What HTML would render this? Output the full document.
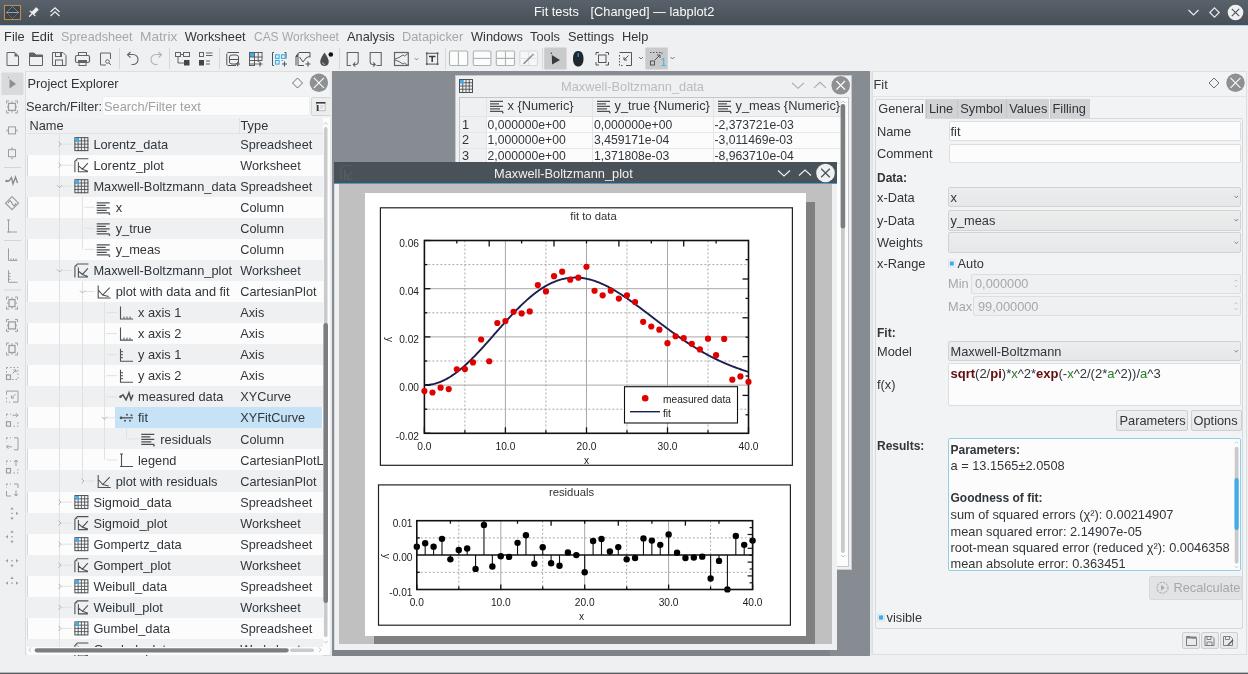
<!DOCTYPE html><html><head><meta charset="utf-8"><style>
*{margin:0;padding:0;box-sizing:border-box}
html,body{width:1248px;height:674px;overflow:hidden;-webkit-font-smoothing:antialiased;background:#eff0f1;font-family:"Liberation Sans", sans-serif;font-size:12.7px;color:#31363b}
.a{position:absolute}
.t{position:absolute;white-space:nowrap;line-height:1;margin-top:1.2px}
b{font-size:12px}
.dis{color:#a5a8ab}
svg{position:absolute;overflow:visible}
</style></head><body><div style="position:absolute;left:0;top:0;width:1248px;height:674px;will-change:transform">
<div class="a" style="left:0;top:0;width:1248px;height:25px;background:linear-gradient(#59626b,#474e56)"></div>
<div class="a" style="left:0;top:25px;width:1248px;height:1px;background:#a9d7f0"></div>
<svg style="left:0;top:0" width="70" height="25">
<rect x="4.5" y="5.5" width="16" height="14" fill="#3d434a" stroke="#b98d4e" stroke-width="1.1"/>
<path d="M6 12.5 H19" stroke="#c5cad0" stroke-width="0.7"/>
<path d="M7 12 L12.5 6.5 L18 12" stroke="#5f8fb5" stroke-width="0.9" fill="none"/>
<path d="M7 13 L12.5 18.5 L18 13" stroke="#6b737b" stroke-width="0.8" fill="none"/>
<path d="M29.5 16.3 L32 13.8" stroke="#f0f0f0" stroke-width="1.3" stroke-linecap="round"/><path d="M30.3 11.2 L35 15.6" stroke="#f0f0f0" stroke-width="1.3" stroke-linecap="round"/><path d="M31.8 12 L36.2 7.6 L38.4 9.8 L34 14.2 Z" fill="#f0f0f0" stroke="#f0f0f0" stroke-width="0.8" stroke-linejoin="round"/>
<path d="M50.5 12 L55 7.8 L59.5 12 M50.5 16 L55 11.8 L59.5 16" stroke="#f0f0f0" stroke-width="1.2" fill="none"/>
</svg>
<div class="t" style="left:534px;top:5px;font-size:12.8px;color:#fcfcfc">Fit tests</div><div class="t" style="left:590.5px;top:5px;font-size:12.8px;color:#fcfcfc">[Changed] — labplot2</div>
<svg style="left:1170px;top:0" width="78" height="25">
<path d="M1188.5 10 L1193.5 15 L1198.5 10" transform="translate(-1170,0)" stroke="#e8eaec" stroke-width="1.2" fill="none"/>
<path d="M1214.5 7.8 L1219.2 12.5 L1214.5 17.2 L1209.8 12.5 Z" transform="translate(-1170,0)" stroke="#e8eaec" stroke-width="1.2" fill="none"/>
<circle cx="65.5" cy="12.5" r="7.8" fill="#eff0f1"/>
<path d="M61.8 8.8 L69.2 16.2 M69.2 8.8 L61.8 16.2" stroke="#4a5158" stroke-width="1.1"/>
</svg>
<div class="t" style="left:4.1px;top:29.6px;font-size:12.8px">File</div>
<div class="t" style="left:31.3px;top:29.6px;font-size:12.8px">Edit</div>
<div class="t dis" style="left:61.3px;top:29.6px;font-size:12.8px;transform:scaleX(0.985);transform-origin:0 0">Spreadsheet</div>
<div class="t dis" style="left:140.3px;top:29.6px;font-size:12.8px;transform:scaleX(1.07);transform-origin:0 0">Matrix</div>
<div class="t" style="left:184.7px;top:29.6px;font-size:12.8px">Worksheet</div>
<div class="t dis" style="left:254px;top:29.6px;font-size:12.8px;transform:scaleX(0.935);transform-origin:0 0">CAS Worksheet</div>
<div class="t" style="left:347px;top:29.6px;font-size:12.8px">Analysis</div>
<div class="t dis" style="left:402px;top:29.6px;font-size:12.8px">Datapicker</div>
<div class="t" style="left:471px;top:29.6px;font-size:12.8px">Windows</div>
<div class="t" style="left:530px;top:29.6px;font-size:12.8px">Tools</div>
<div class="t" style="left:568px;top:29.6px;font-size:12.8px">Settings</div>
<div class="t" style="left:622px;top:29.6px;font-size:12.8px">Help</div>
<svg style="left:0;top:0" width="1248" height="72"><path d="M7 52.5 H15 L18.5 56 V65.5 H7 Z" fill="none" stroke="#606468" stroke-width="1"/><path d="M14.5 52.5 L18.5 56.5 H14.5 Z" fill="#606468"/><path d="M29.5 53 H34 L36 55 H42.5 V65.5 H29.5 Z" fill="none" stroke="#606468"/><path d="M29.5 53 H34 L36 55 H42.5 V57 H29.5 Z" fill="#606468"/><path d="M52.5 52.5 H63 L66 55.5 V65.5 H52.5 Z" fill="none" stroke="#606468"/><rect x="55.5" y="52.5" width="6" height="4" fill="none" stroke="#606468"/><rect x="60" y="53" width="1.5" height="3" fill="#606468"/><rect x="55.5" y="60" width="7" height="5.5" fill="none" stroke="#606468"/><rect x="78.5" y="52.5" width="8" height="3" fill="none" stroke="#606468"/><rect x="75.5" y="55.5" width="14" height="7" rx="1.5" fill="none" stroke="#606468" stroke-width="1.2"/><rect x="78" y="60" width="9" height="2.2" fill="#606468"/><rect x="79" y="62.5" width="7" height="3" fill="none" stroke="#606468"/><path d="M110.5 59 V53 H100.5 V65 H106" fill="none" stroke="#606468"/><circle cx="107.5" cy="61.5" r="1.8" fill="none" stroke="#606468"/><path d="M109 63 L111 65" stroke="#606468"/><rect x="119" y="48" width="1" height="21" fill="#d5d7d9"/><rect x="169" y="48" width="1" height="21" fill="#d5d7d9"/><rect x="219" y="48" width="1" height="21" fill="#d5d7d9"/><rect x="339" y="48" width="1" height="21" fill="#d5d7d9"/><rect x="445" y="48" width="1" height="21" fill="#d5d7d9"/><rect x="542" y="48" width="1" height="21" fill="#d5d7d9"/><path d="M128 54.5 H133 A5 5 0 0 1 133 64.5 H131.5" fill="none" stroke="#606468" stroke-width="1.1"/><path d="M130.5 52 L127.5 54.8 L130.5 57.5" fill="none" stroke="#606468" stroke-width="1.1"/><path d="M161 54.5 H156 A5 5 0 0 0 156 64.5 H157.5" fill="none" stroke="#b0b3b6" stroke-width="1.1"/><path d="M158.5 52 L161.5 54.8 L158.5 57.5" fill="none" stroke="#b0b3b6" stroke-width="1.1"/><rect x="175.5" y="52.5" width="5" height="4" fill="none" stroke="#606468"/><rect x="183.5" y="52.5" width="6" height="4" fill="none" stroke="#606468"/><path d="M180.5 54.5 H183.5 M178 56.5 V63 H184" fill="none" stroke="#606468"/><rect x="184" y="60" width="5.5" height="5.5" fill="#444"/><rect x="199.5" y="52.5" width="4" height="4" fill="none" stroke="#606468"/><path d="M206 53 H212.5 M206 55.5 H212.5 M206 61 H210 M206 64 H210" stroke="#606468"/><rect x="199" y="60" width="5" height="5.5" fill="#444"/><path d="M227.5 52.5 H239 M226.8 53.5 V65 M227.5 65.5 H236" stroke="#505356" fill="none" stroke-width="1"/><path d="M229.5 57 Q229.5 55 232 55 H236 Q238.5 55 238.5 57 V62 Q238.5 64 236 64 H232 Q229.5 64 229.5 62 Z" fill="none" stroke="#505356"/><path d="M229.5 59.5 H238.5" stroke="#505356"/><path d="M235.5 64 H240 M237.75 61.8 V66.2" stroke="#505356" stroke-width="1.1"/><rect x="249.5" y="52.5" width="5" height="4.5" fill="#3daee9"/><path d="M249.5 52 V66 M254.5 52 V66 M258.2 52 V62 M262 52 V60 M249 52.5 H262.5 M249 57 H262.5 M249 60.5 H262.5 M249 64 H257 M249 65.5 H255" stroke="#505356" fill="none" stroke-width="0.9"/><path d="M257.5 64 H262.5 M260 61.5 V66.5" stroke="#505356" stroke-width="1.1"/><path d="M274 52.5 H272.5 V65.5 H274 M284.5 52.5 H286 V58.5" stroke="#505356" fill="none"/><rect x="275.5" y="54.8" width="3.6" height="3.6" fill="none" stroke="#3daee9" stroke-width="1.1"/><rect x="281.5" y="54.8" width="3.6" height="3.6" fill="none" stroke="#3daee9" stroke-width="1.1"/><rect x="275.5" y="60.5" width="3.6" height="3.6" fill="none" stroke="#3daee9" stroke-width="1.1"/><path d="M281.5 60.5 H283" stroke="#3daee9" stroke-width="1.1"/><path d="M282 64 H287 M284.5 61.5 V66.5" stroke="#505356" stroke-width="1.1"/><path d="M296 65.5 V56 L299 52.5 H310 V57.5 M298 53.5 V65.5 H304" stroke="#505356" fill="none"/><path d="M296 56 H298" stroke="#505356" stroke-width="2"/><path d="M299.5 57 L303 62 L306 58 L310 56" stroke="#505356" fill="none"/><path d="M305.5 64 H310.5 M308 61.5 V66.5" stroke="#505356" stroke-width="1.1"/><path d="M324.5 52.5 Q320 59 320.2 62 Q320.7 66 324.5 66 Q328.3 66 328.8 62 Q329 59 324.5 52.5 Z" fill="#4a4d50"/><path d="M322.5 62.5 Q323 64.5 325 64.5" stroke="#d8d9da" stroke-width="0.8" fill="none"/><circle cx="330.8" cy="54.5" r="2.3" fill="#111"/><path d="M351 65.5 H347.2 V52.5 H358.2 V62 Q358.2 64.5 355.5 64.5 H353.5 M355.3 62.3 L353.2 64.5 L355.3 66.7" fill="none" stroke="#606468" stroke-width="1.1"/><path d="M376.5 65.5 H381.2 V52.5 H370.2 V62 Q370.2 64.5 373 64.5 H375 M373.2 62.3 L375.3 64.5 L373.2 66.7" fill="none" stroke="#606468" stroke-width="1.1"/><rect x="394.5" y="52.5" width="13.8" height="13" fill="none" stroke="#606468" stroke-width="1.2"/><path d="M395 59 L399 57.5 L403 55 L404.5 56 L408 53.5 M395 60 L399 61.5 L403 64 L404.5 63 L408 65.5" fill="none" stroke="#606468" stroke-width="1"/><path d="M414.8 58.2 L416.5 59.9 L418.2 58.2" stroke="#606468" fill="none" stroke-width="0.8"/><rect x="426.8" y="53.3" width="10.8" height="10.8" fill="none" stroke="#606468" stroke-width="1.1"/><path d="M429 56.5 H435.5 M432.2 56.5 V62" stroke="#3a3d40" stroke-width="1.6"/><circle cx="426.8" cy="53.3" r="1.1" fill="#606468"/><circle cx="437.6" cy="53.3" r="1.1" fill="#606468"/><circle cx="426.8" cy="64.1" r="1.1" fill="#606468"/><circle cx="437.6" cy="64.1" r="1.1" fill="#606468"/><rect x="449.5" y="51" width="18.2" height="14.5" rx="1.2" fill="#fcfcfc" stroke="#aeb1b4" stroke-width="1.1"/><rect x="473.3" y="51" width="17.6" height="14.5" rx="1.2" fill="#fcfcfc" stroke="#aeb1b4" stroke-width="1.1"/><rect x="496.3" y="51" width="18.2" height="14.5" rx="1.2" fill="#fcfcfc" stroke="#aeb1b4" stroke-width="1.1"/><path d="M458.4 51.5 V65" stroke="#aeb1b4" stroke-width="1.1"/><path d="M473.8 58.4 H490.4" stroke="#aeb1b4" stroke-width="1.1"/><path d="M496.8 58.4 H514 M505.5 51.5 V65" stroke="#aeb1b4" stroke-width="1.1"/><rect x="519.8" y="51" width="17.7" height="14.5" rx="1.2" fill="#f6f7f7" stroke="#d6d8da" stroke-width="1.1"/><path d="M520.3 58.4 H537 M528.6 51.5 V65" stroke="#dfe1e3" stroke-width="1"/><path d="M524 63.5 L532 55.5" stroke="#8a8d90" stroke-width="1.6" stroke-linecap="round"/><path d="M531.5 53.5 Q534.5 53 534.5 55.5 L532.5 56 Z" fill="#b5b8bb"/><rect x="544.2" y="47.6" width="22.4" height="22" rx="1" fill="#c9cacc"/><path d="M551.8 55 L560 60 L552.1 64.5 Z" fill="#3a3a3a"/><circle cx="551.3" cy="53.3" r="0.7" fill="#333"/><path d="M578.2 51 C583 51 583.5 56 583.5 59 C583.5 64 581 66.5 578.2 66.5 C575.4 66.5 573 64 573 59 C573 56 573.5 51 578.2 51 Z" fill="#1e2830"/><rect x="577.5" y="53" width="1.5" height="4" fill="#3a7fb0"/><path d="M596 52.5 H599 M605.5 52.5 H608.5 M596 52.5 V55 M608.5 52.5 V55 M596 62 V65 H599 M608.5 62 V65 H605.5" stroke="#555" fill="none"/><rect x="598.5" y="55" width="7.5" height="7.5" fill="none" stroke="#555" stroke-width="1"/><path d="M619.5 52.5 H631.5 V65.5 H626" stroke="#555" fill="none"/><path d="M619.5 55 V65.5 H623" stroke="#555" fill="none" stroke-dasharray="1.5 1.5"/><path d="M628.5 55.5 L624 60 M624 57 V60 H627" stroke="#555" fill="none"/><path d="M639 57 L641 59 L643 57" stroke="#555" fill="none" stroke-width="0.8"/><rect x="645.3" y="47.6" width="22.5" height="22" rx="1" fill="#c9cacc"/><path d="M650 52.5 H662 V55" stroke="#555" fill="none" stroke-dasharray="1.5 1.5"/><rect x="650.5" y="61" width="4" height="4" fill="none" stroke="#555"/><path d="M655 60 L660 55 M657 55 H660 V58" stroke="#555" fill="none"/><text x="660.5" y="66" font-size="11" fill="#3daee9" font-family="Liberation Sans">1</text><path d="M670.5 57 L672.5 59 L674.5 57" stroke="#555" fill="none" stroke-width="0.8"/></svg>
<svg style="left:0;top:0" width="26" height="660"><rect x="1.5" y="72.6" width="22" height="22.4" rx="1" fill="#d9dadc"/><path d="M9.5 79 L16 84 L9.5 88.5 Z" fill="#8d9093"/><circle cx="8.5" cy="77.5" r="0.6" fill="#8d9093"/><path d="M6.5 103.4 V100.9 H9 M15 100.9 H17.5 V103.4 M17.5 110.4 V112.9 H15 M9 112.9 H6.5 V110.4" fill="none" stroke="#9b9ea1"/><rect x="8.5" y="103.4" width="7" height="7" fill="none" stroke="#9b9ea1" stroke-width="1.3"/><path d="M12 100.9 L10.8 102.4 H13.2 Z M12 112.9 L10.8 111.4 H13.2 Z M6.8 106.9 L8.3 105.7 V108.10000000000001 Z M17.2 106.9 L15.7 105.7 V108.10000000000001 Z" fill="#9b9ea1"/><rect x="8.5" y="126.9" width="7" height="7" fill="none" stroke="#9b9ea1"/><path d="M6 130.4 L7.5 128.9 V131.9 Z M18 130.4 L16.5 128.9 V131.9 Z" fill="#9b9ea1"/><rect x="8.5" y="149.7" width="7" height="7" fill="none" stroke="#9b9ea1"/><path d="M12 147.2 L10.5 148.7 H13.5 Z M12 159.2 L10.5 157.7 H13.5 Z" fill="#9b9ea1"/><rect x="4" y="167" width="17" height="1" fill="#d3d5d7"/><path d="M6.5 181 H9 L11.5 177.5 L13 184 L15.5 177 L17.5 183" fill="none" stroke="#86898c" stroke-width="1.3"/><circle cx="6.5" cy="181" r="1.2" fill="#86898c"/><path d="M12 196.7 L18.5 203.2 L12 209.7 L5.5 203.2 Z" fill="none" stroke="#9b9ea1" stroke-width="1.2"/><path d="M8 203.2 Q10 198.2 12 203.2 T16 203.2" fill="none" stroke="#7c7f82"/><path d="M8.5 220 V232 H17 M7 220 H10 M7 232 H10" fill="none" stroke="#9b9ea1"/><rect x="4" y="240" width="17" height="1" fill="#d3d5d7"/><path d="M8.5 248.4 V260.4 H17.5" fill="none" stroke="#9b9ea1"/><path d="M11 258.4 V260.4 M13.5 258.4 V260.4 M16 258.4 V260.4" stroke="#9b9ea1"/><path d="M8.5 270.3 V282.3 H17.5" fill="none" stroke="#9b9ea1"/><path d="M8.5 273.3 H10.5 M8.5 276.3 H10.5 M8.5 279.3 H10.5" stroke="#9b9ea1"/><rect x="4" y="289.5" width="17" height="1" fill="#d3d5d7"/><path d="M6.5 299.6 V297.1 H9 M15 297.1 H17.5 V299.6 M17.5 306.6 V309.1 H15 M9 309.1 H6.5 V306.6" fill="none" stroke="#9b9ea1"/><rect x="9" y="299.6" width="6" height="7" fill="none" stroke="#9b9ea1" stroke-width="1.3"/><path d="M12 297.1 L10.8 298.6 H13.2 Z M12 309.1 L10.8 307.6 H13.2 Z M6.8 303.1 L8.3 301.90000000000003 V304.3 Z M17.2 303.1 L15.7 301.90000000000003 V304.3 Z" fill="#9b9ea1"/><path d="M6.5 321.9 V319.4 H9 M15 319.4 H17.5 V321.9 M17.5 328.9 V331.4 H15 M9 331.4 H6.5 V328.9" fill="none" stroke="#9b9ea1"/><rect x="8.5" y="321.9" width="7" height="7" fill="none" stroke="#9b9ea1" stroke-width="1.3"/><path d="M6.8 325.4 L8.3 324.2 V326.59999999999997 Z M17.2 325.4 L15.7 324.2 V326.59999999999997 Z" fill="#9b9ea1"/><path d="M6.5 345.5 V343 H9 M15 343 H17.5 V345.5 M17.5 352.5 V355 H15 M9 355 H6.5 V352.5" fill="none" stroke="#9b9ea1"/><rect x="9" y="345.5" width="6" height="7" fill="none" stroke="#9b9ea1" stroke-width="1.3"/><path d="M12 343 L10.8 344.5 H13.2 Z M12 355 L10.8 353.5 H13.2 Z" fill="#9b9ea1"/><rect x="6.5" y="367.5" width="11.5" height="12" fill="none" stroke="#9b9ea1" stroke-dasharray="1.5 2"/><rect x="6.5" y="375.0" width="4" height="4.5" fill="none" stroke="#9b9ea1" stroke-width="1.2"/><path d="M12.5 373.5 L16 370.0 M13.5 370.0 H16 V372.5" fill="none" stroke="#9b9ea1"/><path d="M6.5 394.6 V391.1 H18 V402.1 H13" fill="none" stroke="#9b9ea1"/><path d="M6.5 397.6 V402.1 H10" fill="none" stroke="#9b9ea1" stroke-dasharray="1.5 2"/><path d="M15.5 394.1 L11.5 398.1 M11.5 395.6 V398.1 H14" fill="none" stroke="#9b9ea1"/><path d="M6.5 414.2 H11 M6.5 414.2 V418.2 M18 422.2 V426.2 H13" fill="none" stroke="#9b9ea1" stroke-dasharray="1.5 2"/><rect x="6.5" y="421.7" width="4" height="4.5" fill="none" stroke="#9b9ea1" stroke-width="1.2"/><path d="M12.5 415.2 H18 M16 413.2 L18 415.2 L16 417.2" fill="none" stroke="#9b9ea1"/><path d="M6.5 437.8 H11 M6.5 437.8 V441.8" fill="none" stroke="#9b9ea1" stroke-dasharray="1.5 2"/><path d="M14 437.8 H18 V449.8 H14" fill="none" stroke="#9b9ea1"/><path d="M6.5 446.8 H12 M8.5 444.8 L6.5 446.8 L8.5 448.8" fill="none" stroke="#9b9ea1"/><path d="M6.5 461 H11 M6.5 461 V465 M18 469 V473 H13" fill="none" stroke="#9b9ea1" stroke-dasharray="1.5 2"/><rect x="6.5" y="468.5" width="4" height="4.5" fill="none" stroke="#9b9ea1" stroke-width="1.2"/><path d="M16 460 V466 M14 462 L16 460 L18 462" fill="none" stroke="#9b9ea1"/><path d="M6.5 484 H11 M6.5 484 V488" fill="none" stroke="#9b9ea1" stroke-dasharray="1.5 2"/><path d="M14 484 H18 V488 M6.5 491 V496 H11" fill="none" stroke="#9b9ea1"/><path d="M16 490.5 V496 M14 494 L16 496 L18 494" fill="none" stroke="#9b9ea1"/><path d="M12 506.9 L10.3 509.4 H13.7 Z M12 519.9 L10.3 517.4 H13.7 Z M18.5 513.4 L16 511.7 V515.1 Z" fill="#9b9ea1"/><rect x="11.3" y="512.6999999999999" width="1.4" height="1.4" fill="#9b9ea1"/><path d="M12 530.2 L10.3 532.7 H13.7 Z M12 543.2 L10.3 540.7 H13.7 Z M5.5 536.7 L8 535.0 V538.4000000000001 Z" fill="#9b9ea1"/><rect x="11.3" y="536.0" width="1.4" height="1.4" fill="#9b9ea1"/><path d="M12 567.2 L10.3 564.7 H13.7 Z M5.5 560.7 L8 559.0 V562.4000000000001 Z M18.5 560.7 L16 559.0 V562.4000000000001 Z" fill="#9b9ea1"/><rect x="11.3" y="560.0" width="1.4" height="1.4" fill="#9b9ea1"/><path d="M12 576.6 L10.3 579.1 H13.7 Z M5.5 583.1 L8 581.4 V584.8000000000001 Z M18.5 583.1 L16 581.4 V584.8000000000001 Z" fill="#9b9ea1"/><rect x="11.3" y="582.4" width="1.4" height="1.4" fill="#9b9ea1"/></svg>
<div class="a" style="left:25px;top:71px;width:306px;height:584px;background:#f2f3f5;border:1px solid #dcdee0;border-right:none"></div>
<div class="t" style="left:27.5px;top:77px;font-size:12.8px">Project Explorer</div>
<svg style="left:0;top:0" width="1" height="1"><path d="M297.5 78 L302.5 83 L297.5 88 L292.5 83 Z" fill="none" stroke="#6d7073" stroke-width="1"/><circle cx="318.9" cy="82.8" r="9.25" fill="#8e9194"/><path d="M313.9 77.8 L323.9 87.8 M323.9 77.8 L313.9 87.8" stroke="#fcfcfc" stroke-width="1.1"/></svg>
<div class="t" style="left:26px;top:99.8px;font-size:12.8px">Search/Filter:</div>
<div class="a" style="left:101.5px;top:96px;width:208px;height:20px;background:#fcfcfc;border:1px solid #eceeef;border-radius:2px"></div>
<div class="t" style="left:104px;top:99.8px;color:#9fa2a5;font-size:12.8px">Search/Filter text</div>
<div class="a" style="left:311.3px;top:96.5px;width:19.3px;height:19px;background:#eceded;border:1px solid #d3d5d7;border-radius:2px"></div>
<svg style="left:0;top:0" width="1" height="1"><rect x="316.3" y="102.3" width="8.8" height="8.5" fill="#f4f5f6" stroke="#9a9da0" stroke-width="0.6"/><rect x="316" y="102" width="9.4" height="1.6" fill="#3a3d40"/><rect x="317" y="105" width="1.6" height="6" fill="#3a3d40"/><path d="M320 106 H324 M320 108 H323" stroke="#b8babc" stroke-width="0.7"/></svg>
<div class="a" style="left:26.5px;top:117.5px;width:304px;height:538px;background:#fcfcfc;border:1px solid #d6d8da"></div>
<div class="a" style="left:27px;top:118px;width:296px;height:15.5px;background:#eff0f1;border-bottom:1px solid #e1e3e5"></div>
<div class="a" style="left:238.5px;top:118px;width:1px;height:15.5px;background:#dfe1e3"></div>
<div class="t" style="left:29.5px;top:119.2px;font-size:12.8px">Name</div>
<div class="t" style="left:240.5px;top:119.2px;font-size:12.8px">Type</div>
<div class="a" style="left:27px;top:133.60px;width:296px;height:21.05px;background:#eff0f1"></div>
<div class="a" style="left:27px;top:175.71px;width:296px;height:21.05px;background:#eff0f1"></div>
<div class="a" style="left:27px;top:217.82px;width:296px;height:21.05px;background:#eff0f1"></div>
<div class="a" style="left:27px;top:259.93px;width:296px;height:21.05px;background:#eff0f1"></div>
<div class="a" style="left:27px;top:302.04px;width:296px;height:21.05px;background:#eff0f1"></div>
<div class="a" style="left:27px;top:344.15px;width:296px;height:21.05px;background:#eff0f1"></div>
<div class="a" style="left:27px;top:386.26px;width:296px;height:21.05px;background:#eff0f1"></div>
<div class="a" style="left:27px;top:428.37px;width:296px;height:21.05px;background:#eff0f1"></div>
<div class="a" style="left:27px;top:470.48px;width:296px;height:21.05px;background:#eff0f1"></div>
<div class="a" style="left:27px;top:512.59px;width:296px;height:21.05px;background:#eff0f1"></div>
<div class="a" style="left:27px;top:554.70px;width:296px;height:21.05px;background:#eff0f1"></div>
<div class="a" style="left:27px;top:596.81px;width:296px;height:21.05px;background:#eff0f1"></div>
<div class="a" style="left:27px;top:638.92px;width:296px;height:21.05px;background:#eff0f1"></div>
<div class="a" style="left:115.2px;top:407.31px;width:207.3px;height:21.05px;background:#c5e2f6"></div>
<div class="t" style="left:93.4px;top:137.6px;font-size:12.8px">Lorentz_data</div>
<div class="t" style="left:240.3px;top:137.6px;font-size:12.7px">Spreadsheet</div>
<div class="t" style="left:93.4px;top:158.7px;font-size:12.8px">Lorentz_plot</div>
<div class="t" style="left:240.3px;top:158.7px;font-size:12.7px">Worksheet</div>
<div class="t" style="left:93.4px;top:179.7px;font-size:12.8px">Maxwell-Boltzmann_data</div>
<div class="t" style="left:240.3px;top:179.7px;font-size:12.7px">Spreadsheet</div>
<div class="t" style="left:115.7px;top:200.8px;font-size:12.8px">x</div>
<div class="t" style="left:240.3px;top:200.8px;font-size:12.7px">Column</div>
<div class="t" style="left:115.7px;top:221.8px;font-size:12.8px">y_true</div>
<div class="t" style="left:240.3px;top:221.8px;font-size:12.7px">Column</div>
<div class="t" style="left:115.7px;top:242.9px;font-size:12.8px">y_meas</div>
<div class="t" style="left:240.3px;top:242.9px;font-size:12.7px">Column</div>
<div class="t" style="left:93.4px;top:264.0px;font-size:12.8px">Maxwell-Boltzmann_plot</div>
<div class="t" style="left:240.3px;top:264.0px;font-size:12.7px">Worksheet</div>
<div class="t" style="left:115.7px;top:285.0px;font-size:12.8px">plot with data and fit</div>
<div class="t" style="left:240.3px;top:285.0px;font-size:12.7px">CartesianPlot</div>
<div class="t" style="left:138.0px;top:306.1px;font-size:12.8px">x axis 1</div>
<div class="t" style="left:240.3px;top:306.1px;font-size:12.7px">Axis</div>
<div class="t" style="left:138.0px;top:327.1px;font-size:12.8px">x axis 2</div>
<div class="t" style="left:240.3px;top:327.1px;font-size:12.7px">Axis</div>
<div class="t" style="left:138.0px;top:348.2px;font-size:12.8px">y axis 1</div>
<div class="t" style="left:240.3px;top:348.2px;font-size:12.7px">Axis</div>
<div class="t" style="left:138.0px;top:369.2px;font-size:12.8px">y axis 2</div>
<div class="t" style="left:240.3px;top:369.2px;font-size:12.7px">Axis</div>
<div class="t" style="left:138.0px;top:390.3px;font-size:12.8px">measured data</div>
<div class="t" style="left:240.3px;top:390.3px;font-size:12.7px">XYCurve</div>
<div class="t" style="left:138.0px;top:411.3px;font-size:12.8px">fit</div>
<div class="t" style="left:240.3px;top:411.3px;font-size:12.7px">XYFitCurve</div>
<div class="t" style="left:160.3px;top:432.4px;font-size:12.8px">residuals</div>
<div class="t" style="left:240.3px;top:432.4px;font-size:12.7px">Column</div>
<div class="t" style="left:138.0px;top:453.5px;font-size:12.8px">legend</div>
<div class="t" style="left:240.3px;top:453.5px;font-size:12.7px">CartesianPlotL</div>
<div class="t" style="left:115.7px;top:474.5px;font-size:12.8px">plot with residuals</div>
<div class="t" style="left:240.3px;top:474.5px;font-size:12.7px">CartesianPlot</div>
<div class="t" style="left:93.4px;top:495.6px;font-size:12.8px">Sigmoid_data</div>
<div class="t" style="left:240.3px;top:495.6px;font-size:12.7px">Spreadsheet</div>
<div class="t" style="left:93.4px;top:516.6px;font-size:12.8px">Sigmoid_plot</div>
<div class="t" style="left:240.3px;top:516.6px;font-size:12.7px">Worksheet</div>
<div class="t" style="left:93.4px;top:537.7px;font-size:12.8px">Gompertz_data</div>
<div class="t" style="left:240.3px;top:537.7px;font-size:12.7px">Spreadsheet</div>
<div class="t" style="left:93.4px;top:558.7px;font-size:12.8px">Gompert_plot</div>
<div class="t" style="left:240.3px;top:558.7px;font-size:12.7px">Worksheet</div>
<div class="t" style="left:93.4px;top:579.8px;font-size:12.8px">Weibull_data</div>
<div class="t" style="left:240.3px;top:579.8px;font-size:12.7px">Spreadsheet</div>
<div class="t" style="left:93.4px;top:600.8px;font-size:12.8px">Weibull_plot</div>
<div class="t" style="left:240.3px;top:600.8px;font-size:12.7px">Worksheet</div>
<div class="t" style="left:93.4px;top:621.9px;font-size:12.8px">Gumbel_data</div>
<div class="t" style="left:240.3px;top:621.9px;font-size:12.7px">Spreadsheet</div>
<div class="t" style="left:93.4px;top:642.9px;font-size:12.8px">Gumbel_plot</div>
<div class="t" style="left:240.3px;top:642.9px;font-size:12.7px">Worksheet</div>
<svg style="left:0;top:0" width="1" height="1"><path d="M59.5 133.6 V650.0" stroke="#e0e1e3"/><path d="M82.5 196.8 V249.4" stroke="#e0e1e3"/><path d="M82.5 281.0 V481.0" stroke="#e0e1e3"/><path d="M104.5 302.0 V460.0" stroke="#e0e1e3"/><path d="M126.5 428.4 V438.9" stroke="#e0e1e3"/><path d="M61.5 144.1 H72.4" stroke="#e0e1e3"/><path d="M58.5 141.6 L61.0 144.1 L58.5 146.6" fill="none" stroke="#a7aaad" stroke-width="0.9"/><rect x="74.9" y="137.6275" width="13" height="13" fill="none" stroke="#4d5154"/><path d="M78.15 137.1275 V151.1275 M74.4 140.88 H88.4" stroke="#4d5154" stroke-width="0.9"/><path d="M81.40 137.1275 V151.1275 M74.4 144.13 H88.4" stroke="#4d5154" stroke-width="0.9"/><path d="M84.65 137.1275 V151.1275 M74.4 147.38 H88.4" stroke="#4d5154" stroke-width="0.9"/><rect x="75.4" y="138.1275" width="3.5" height="3.5" fill="#3daee9"/><path d="M61.5 165.2 H72.4" stroke="#e0e1e3"/><path d="M58.5 162.7 L61.0 165.2 L58.5 167.7" fill="none" stroke="#a7aaad" stroke-width="0.9"/><path d="M74.9 172.1825 V161.1825 L77.4 158.6825 H88.4" fill="none" stroke="#4d5154" stroke-width="1.1"/><path d="M76.4 159.6825 L76.4 161.1825 H77.9 Z" fill="#4d5154"/><path d="M78.4 162.1825 V171.6825 H87.9 M78.9 166.1825 L82.4 169.1825 L87.9 163.1825 M82.4 169.1825 L87.9 171.1825" fill="none" stroke="#4d5154" stroke-width="1.1"/><path d="M61.5 186.2 H72.4" stroke="#e0e1e3"/><path d="M57.0 185.2 L59.5 187.7 L62.0 185.2" fill="none" stroke="#a7aaad" stroke-width="0.9"/><rect x="74.9" y="179.73749999999998" width="13" height="13" fill="none" stroke="#4d5154"/><path d="M78.15 179.23749999999998 V193.23749999999998 M74.4 182.99 H88.4" stroke="#4d5154" stroke-width="0.9"/><path d="M81.40 179.23749999999998 V193.23749999999998 M74.4 186.24 H88.4" stroke="#4d5154" stroke-width="0.9"/><path d="M84.65 179.23749999999998 V193.23749999999998 M74.4 189.49 H88.4" stroke="#4d5154" stroke-width="0.9"/><rect x="75.4" y="180.23749999999998" width="3.5" height="3.5" fill="#3daee9"/><path d="M84.5 207.3 H94.7" stroke="#e0e1e3"/><path d="M96.7 202.7925 H109.7 M96.7 205.2925 H105.7 M96.7 207.7925 H109.7 M96.7 210.2925 H106.7 M96.7 212.7925 H109.7" stroke="#4d5154" stroke-width="1.2"/><rect x="108.7" y="213.2925" width="1.5" height="1.5" fill="#4d5154"/><path d="M84.5 228.3 H94.7" stroke="#e0e1e3"/><path d="M96.7 223.8475 H109.7 M96.7 226.3475 H105.7 M96.7 228.8475 H109.7 M96.7 231.3475 H106.7 M96.7 233.8475 H109.7" stroke="#4d5154" stroke-width="1.2"/><rect x="108.7" y="234.3475" width="1.5" height="1.5" fill="#4d5154"/><path d="M84.5 249.4 H94.7" stroke="#e0e1e3"/><path d="M96.7 244.9025 H109.7 M96.7 247.4025 H105.7 M96.7 249.9025 H109.7 M96.7 252.4025 H106.7 M96.7 254.9025 H109.7" stroke="#4d5154" stroke-width="1.2"/><rect x="108.7" y="255.4025" width="1.5" height="1.5" fill="#4d5154"/><path d="M61.5 270.5 H72.4" stroke="#e0e1e3"/><path d="M57.0 269.5 L59.5 272.0 L62.0 269.5" fill="none" stroke="#a7aaad" stroke-width="0.9"/><path d="M74.9 277.4575 V266.4575 L77.4 263.9575 H88.4" fill="none" stroke="#4d5154" stroke-width="1.1"/><path d="M76.4 264.9575 L76.4 266.4575 H77.9 Z" fill="#4d5154"/><path d="M78.4 267.4575 V276.9575 H87.9 M78.9 271.4575 L82.4 274.4575 L87.9 268.4575 M82.4 274.4575 L87.9 276.4575" fill="none" stroke="#4d5154" stroke-width="1.1"/><path d="M84.5 291.5 H94.7" stroke="#e0e1e3"/><path d="M80.0 290.5 L82.5 293.0 L85.0 290.5" fill="none" stroke="#a7aaad" stroke-width="0.9"/><path d="M98.2 285.5125 V298.0125 H110.7 M98.7 290.5125 L102.7 295.0125 L109.7 287.5125 M102.7 295.0125 L108.7 296.5125" fill="none" stroke="#4d5154" stroke-width="1.1"/><path d="M106.5 312.6 H117.0" stroke="#e0e1e3"/><path d="M120.5 306.56749999999994 V319.06749999999994 H133.0" fill="none" stroke="#4d5154" stroke-width="1.1"/><path d="M124.0 316.56749999999994 V318.56749999999994 M127.0 316.56749999999994 V318.56749999999994 M130.0 316.56749999999994 V318.56749999999994" stroke="#4d5154"/><path d="M106.5 333.6 H117.0" stroke="#e0e1e3"/><path d="M120.5 327.6225 V340.1225 H133.0" fill="none" stroke="#4d5154" stroke-width="1.1"/><path d="M124.0 337.6225 V339.6225 M127.0 337.6225 V339.6225 M130.0 337.6225 V339.6225" stroke="#4d5154"/><path d="M106.5 354.7 H117.0" stroke="#e0e1e3"/><path d="M120.5 348.67749999999995 V361.17749999999995 H133.0" fill="none" stroke="#4d5154" stroke-width="1.1"/><path d="M120.5 351.67749999999995 H123.0 M120.5 354.67749999999995 H123.0 M120.5 357.67749999999995 H123.0" stroke="#4d5154"/><path d="M106.5 375.7 H117.0" stroke="#e0e1e3"/><path d="M120.5 369.73249999999996 V382.23249999999996 H133.0" fill="none" stroke="#4d5154" stroke-width="1.1"/><path d="M120.5 372.73249999999996 H123.0 M120.5 375.73249999999996 H123.0 M120.5 378.73249999999996 H123.0" stroke="#4d5154"/><path d="M106.5 396.8 H117.0" stroke="#e0e1e3"/><path d="M120.0 396.78749999999997 L123.0 394.78749999999997 L126.0 399.78749999999997 L129.0 392.78749999999997 L131.0 399.78749999999997 L133.0 394.78749999999997" fill="none" stroke="#4d5154" stroke-width="1.5"/><circle cx="120.5" cy="396.78749999999997" r="1.3" fill="#4d5154"/><path d="M106.5 417.8 H117.0" stroke="#e0e1e3"/><path d="M102.0 416.8 L104.5 419.3 L107.0 416.8" fill="none" stroke="#a7aaad" stroke-width="0.9"/><path d="M120.0 417.8424999999999 H133.0" stroke="#4d5154" stroke-width="1.3"/><circle cx="121.0" cy="417.8424999999999" r="1.3" fill="#4d5154"/><circle cx="127.0" cy="414.8424999999999" r="1" fill="#4d5154"/><circle cx="130.0" cy="420.8424999999999" r="1" fill="#4d5154"/><circle cx="131.5" cy="415.3424999999999" r="1" fill="#4d5154"/><circle cx="125.0" cy="420.8424999999999" r="1" fill="#4d5154"/><path d="M128.5 438.9 H139.3" stroke="#e0e1e3"/><path d="M141.3 434.3975 H154.3 M141.3 436.8975 H150.3 M141.3 439.3975 H154.3 M141.3 441.8975 H151.3 M141.3 444.3975 H154.3" stroke="#4d5154" stroke-width="1.2"/><rect x="153.3" y="444.8975" width="1.5" height="1.5" fill="#4d5154"/><path d="M106.5 460.0 H117.0" stroke="#e0e1e3"/><path d="M121.5 453.95249999999993 V466.45249999999993 H133.0 M120.0 453.95249999999993 H123.0 M120.0 466.45249999999993 H123.0" fill="none" stroke="#4d5154" stroke-width="1.1"/><path d="M84.5 481.0 H94.7" stroke="#e0e1e3"/><path d="M81.5 478.5 L84.0 481.0 L81.5 483.5" fill="none" stroke="#a7aaad" stroke-width="0.9"/><path d="M98.2 475.0075 V487.5075 H110.7 M98.7 480.0075 L102.7 484.5075 L109.7 477.0075 M102.7 484.5075 L108.7 486.0075" fill="none" stroke="#4d5154" stroke-width="1.1"/><path d="M61.5 502.1 H72.4" stroke="#e0e1e3"/><path d="M58.5 499.6 L61.0 502.1 L58.5 504.6" fill="none" stroke="#a7aaad" stroke-width="0.9"/><rect x="74.9" y="495.56249999999994" width="13" height="13" fill="none" stroke="#4d5154"/><path d="M78.15 495.06249999999994 V509.06249999999994 M74.4 498.81 H88.4" stroke="#4d5154" stroke-width="0.9"/><path d="M81.40 495.06249999999994 V509.06249999999994 M74.4 502.06 H88.4" stroke="#4d5154" stroke-width="0.9"/><path d="M84.65 495.06249999999994 V509.06249999999994 M74.4 505.31 H88.4" stroke="#4d5154" stroke-width="0.9"/><rect x="75.4" y="496.06249999999994" width="3.5" height="3.5" fill="#3daee9"/><path d="M61.5 523.1 H72.4" stroke="#e0e1e3"/><path d="M58.5 520.6 L61.0 523.1 L58.5 525.6" fill="none" stroke="#a7aaad" stroke-width="0.9"/><path d="M74.9 530.1175000000001 V519.1175000000001 L77.4 516.6175000000001 H88.4" fill="none" stroke="#4d5154" stroke-width="1.1"/><path d="M76.4 517.6175000000001 L76.4 519.1175000000001 H77.9 Z" fill="#4d5154"/><path d="M78.4 520.1175000000001 V529.6175000000001 H87.9 M78.9 524.1175000000001 L82.4 527.1175000000001 L87.9 521.1175000000001 M82.4 527.1175000000001 L87.9 529.1175000000001" fill="none" stroke="#4d5154" stroke-width="1.1"/><path d="M61.5 544.2 H72.4" stroke="#e0e1e3"/><path d="M58.5 541.7 L61.0 544.2 L58.5 546.7" fill="none" stroke="#a7aaad" stroke-width="0.9"/><rect x="74.9" y="537.6725" width="13" height="13" fill="none" stroke="#4d5154"/><path d="M78.15 537.1725 V551.1725 M74.4 540.92 H88.4" stroke="#4d5154" stroke-width="0.9"/><path d="M81.40 537.1725 V551.1725 M74.4 544.17 H88.4" stroke="#4d5154" stroke-width="0.9"/><path d="M84.65 537.1725 V551.1725 M74.4 547.42 H88.4" stroke="#4d5154" stroke-width="0.9"/><rect x="75.4" y="538.1725" width="3.5" height="3.5" fill="#3daee9"/><path d="M61.5 565.2 H72.4" stroke="#e0e1e3"/><path d="M58.5 562.7 L61.0 565.2 L58.5 567.7" fill="none" stroke="#a7aaad" stroke-width="0.9"/><path d="M74.9 572.2275000000001 V561.2275000000001 L77.4 558.7275000000001 H88.4" fill="none" stroke="#4d5154" stroke-width="1.1"/><path d="M76.4 559.7275000000001 L76.4 561.2275000000001 H77.9 Z" fill="#4d5154"/><path d="M78.4 562.2275000000001 V571.7275000000001 H87.9 M78.9 566.2275000000001 L82.4 569.2275000000001 L87.9 563.2275000000001 M82.4 569.2275000000001 L87.9 571.2275000000001" fill="none" stroke="#4d5154" stroke-width="1.1"/><path d="M61.5 586.3 H72.4" stroke="#e0e1e3"/><path d="M58.5 583.8 L61.0 586.3 L58.5 588.8" fill="none" stroke="#a7aaad" stroke-width="0.9"/><rect x="74.9" y="579.7825" width="13" height="13" fill="none" stroke="#4d5154"/><path d="M78.15 579.2825 V593.2825 M74.4 583.03 H88.4" stroke="#4d5154" stroke-width="0.9"/><path d="M81.40 579.2825 V593.2825 M74.4 586.28 H88.4" stroke="#4d5154" stroke-width="0.9"/><path d="M84.65 579.2825 V593.2825 M74.4 589.53 H88.4" stroke="#4d5154" stroke-width="0.9"/><rect x="75.4" y="580.2825" width="3.5" height="3.5" fill="#3daee9"/><path d="M61.5 607.3 H72.4" stroke="#e0e1e3"/><path d="M58.5 604.8 L61.0 607.3 L58.5 609.8" fill="none" stroke="#a7aaad" stroke-width="0.9"/><path d="M74.9 614.3375 V603.3375 L77.4 600.8375 H88.4" fill="none" stroke="#4d5154" stroke-width="1.1"/><path d="M76.4 601.8375 L76.4 603.3375 H77.9 Z" fill="#4d5154"/><path d="M78.4 604.3375 V613.8375 H87.9 M78.9 608.3375 L82.4 611.3375 L87.9 605.3375 M82.4 611.3375 L87.9 613.3375" fill="none" stroke="#4d5154" stroke-width="1.1"/><path d="M61.5 628.4 H72.4" stroke="#e0e1e3"/><path d="M58.5 625.9 L61.0 628.4 L58.5 630.9" fill="none" stroke="#a7aaad" stroke-width="0.9"/><rect x="74.9" y="621.8925" width="13" height="13" fill="none" stroke="#4d5154"/><path d="M78.15 621.3925 V635.3925 M74.4 625.14 H88.4" stroke="#4d5154" stroke-width="0.9"/><path d="M81.40 621.3925 V635.3925 M74.4 628.39 H88.4" stroke="#4d5154" stroke-width="0.9"/><path d="M84.65 621.3925 V635.3925 M74.4 631.64 H88.4" stroke="#4d5154" stroke-width="0.9"/><rect x="75.4" y="622.3925" width="3.5" height="3.5" fill="#3daee9"/><path d="M61.5 649.4 H72.4" stroke="#e0e1e3"/><path d="M58.5 646.9 L61.0 649.4 L58.5 651.9" fill="none" stroke="#a7aaad" stroke-width="0.9"/><path d="M74.9 656.4475 V645.4475 L77.4 642.9475 H88.4" fill="none" stroke="#4d5154" stroke-width="1.1"/><path d="M76.4 643.9475 L76.4 645.4475 H77.9 Z" fill="#4d5154"/><path d="M78.4 646.4475 V655.9475 H87.9 M78.9 650.4475 L82.4 653.4475 L87.9 647.4475 M82.4 653.4475 L87.9 655.4475" fill="none" stroke="#4d5154" stroke-width="1.1"/></svg>
<div class="a" style="left:27px;top:647px;width:296px;height:7.5px;background:#fcfcfc"></div>
<svg style="left:0;top:0" width="1" height="1"><rect x="290" y="648.5" width="24" height="3.5" rx="1.7" fill="#c8cacc"/><rect x="34.7" y="648.2" width="254" height="4.2" rx="2.1" fill="#7b7e81"/><path d="M31 647.5 L29 649.8 L31 652" fill="none" stroke="#b4b6b8" stroke-width="0.8"/><path d="M319 647.5 L321 649.8 L319 652" fill="none" stroke="#b4b6b8" stroke-width="0.8"/></svg>
<div class="a" style="left:323px;top:118px;width:7px;height:525px;background:#fcfcfc"></div>
<svg style="left:0;top:0" width="1" height="1"><path d="M323.7 124.5 L325.7 122.5 L327.7 124.5" fill="none" stroke="#b4b6b8" stroke-width="0.8"/><rect x="323.9" y="127" width="3.6" height="510" rx="1.8" fill="#c8cacc"/><rect x="323.4" y="323" width="4.6" height="280" rx="2.3" fill="#7b7e81"/><path d="M323.7 641 L325.7 643 L327.7 641" fill="none" stroke="#b4b6b8" stroke-width="0.8"/></svg>
<div class="a" style="left:330px;top:71px;width:2px;height:584px;background:#e9eaec"></div>
<div class="a" style="left:332px;top:71px;width:538px;height:585px;background:#878b92"></div>
<div class="a" style="left:455px;top:75px;width:397px;height:495px;background:#eff0f1;border:1px solid #c7c9cc"></div>
<svg style="left:0;top:0" width="1" height="1"><rect x="459.5" y="79.5" width="13" height="13" fill="none" stroke="#4d5154"/><path d="M462.75 79 V93 M459 82.75 H473" stroke="#4d5154" stroke-width="0.9"/><path d="M466.00 79 V93 M459 86.00 H473" stroke="#4d5154" stroke-width="0.9"/><path d="M469.25 79 V93 M459 89.25 H473" stroke="#4d5154" stroke-width="0.9"/><rect x="460" y="80" width="3.5" height="3.5" fill="#3daee9"/></svg>
<div class="t" style="left:561px;top:79.5px;font-size:12.8px;color:#b9bcbf">Maxwell-Boltzmann_data</div>
<svg style="left:0;top:0" width="1" height="1"><path d="M792 82.8 L798 88.3 L804 82.8" fill="none" stroke="#a7aaad" stroke-width="1.1"/><path d="M814 87.8 L820 82.3 L826 87.8" fill="none" stroke="#a7aaad" stroke-width="1.1"/><circle cx="840.7" cy="85.3" r="9.3" fill="#8e9194"/><path d="M836.4000000000001 81.0 L845.0 89.6 M845.0 81.0 L836.4000000000001 89.6" stroke="#fcfcfc" stroke-width="1.3"/></svg>
<div class="a" style="left:459px;top:97px;width:389.5px;height:469.5px;background:#fcfcfc;border:1px solid #c4c6c9"></div>
<div class="a" style="left:460px;top:98px;width:381px;height:18.5px;background:#eff0f1;border-bottom:1px solid #e1e3e5"></div>
<div class="a" style="left:460px;top:116.5px;width:25.5px;height:449px;background:#eff0f1"></div>
<div class="a" style="left:485.5px;top:98px;width:1px;height:64px;background:#e1e3e5"></div>
<div class="a" style="left:592px;top:98px;width:1px;height:64px;background:#e1e3e5"></div>
<div class="a" style="left:712.5px;top:98px;width:1px;height:64px;background:#e1e3e5"></div>
<div class="a" style="left:460px;top:132.0px;width:381px;height:1px;background:#e4e6e8"></div>
<div class="a" style="left:460px;top:147.5px;width:381px;height:1px;background:#e4e6e8"></div>
<div class="a" style="left:460px;top:163.0px;width:381px;height:1px;background:#e4e6e8"></div>
<div class="t" style="left:507.5px;top:99px;font-size:12.8px">x {Numeric}</div>
<div class="t" style="left:614.5px;top:99px;font-size:12.8px">y_true {Numeric}</div>
<div class="t" style="left:735.5px;top:99px;font-size:12.8px">y_meas {Numeric}</div>
<svg style="left:0;top:0" width="1" height="1"><path d="M490 101.3 H503 M490 103.8 H499 M490 106.3 H503 M490 108.8 H500 M490 111.3 H503" stroke="#4d5154" stroke-width="1.2"/><rect x="502" y="111.8" width="1.5" height="1.5" fill="#4d5154"/><path d="M597 101.3 H610 M597 103.8 H606 M597 106.3 H610 M597 108.8 H607 M597 111.3 H610" stroke="#4d5154" stroke-width="1.2"/><rect x="609" y="111.8" width="1.5" height="1.5" fill="#4d5154"/><path d="M718 101.3 H731 M718 103.8 H727 M718 106.3 H731 M718 108.8 H728 M718 111.3 H731" stroke="#4d5154" stroke-width="1.2"/><rect x="730" y="111.8" width="1.5" height="1.5" fill="#4d5154"/></svg>
<div class="t" style="left:462px;top:117.5px;font-size:12.8px">1</div>
<div class="t" style="left:487.5px;top:117.5px;font-size:12.2px">0,000000e+00</div>
<div class="t" style="left:594px;top:117.5px;font-size:12.2px">0,000000e+00</div>
<div class="t" style="left:714.5px;top:117.5px;font-size:12.2px">-2,373721e-03</div>
<div class="t" style="left:462px;top:133.0px;font-size:12.8px">2</div>
<div class="t" style="left:487.5px;top:133.0px;font-size:12.2px">1,000000e+00</div>
<div class="t" style="left:594px;top:133.0px;font-size:12.2px">3,459171e-04</div>
<div class="t" style="left:714.5px;top:133.0px;font-size:12.2px">-3,011469e-03</div>
<div class="t" style="left:462px;top:148.5px;font-size:12.8px">3</div>
<div class="t" style="left:487.5px;top:148.5px;font-size:12.2px">2,000000e+00</div>
<div class="t" style="left:594px;top:148.5px;font-size:12.2px">1,371808e-03</div>
<div class="t" style="left:714.5px;top:148.5px;font-size:12.2px">-8,963710e-04</div>
<div class="t" style="left:462px;top:164.0px;font-size:12.8px">4</div>
<div class="t" style="left:487.5px;top:164.0px;font-size:12.2px">3,000000e+00</div>
<div class="t" style="left:594px;top:164.0px;font-size:12.2px">3,051917e-03</div>
<div class="t" style="left:714.5px;top:164.0px;font-size:12.2px">-2,000000e-03</div>
<svg style="left:0;top:0" width="1" height="1"><path d="M841 103 L843 101 L845 103" fill="none" stroke="#b4b6b8" stroke-width="0.8"/><rect x="841" y="105" width="3.8" height="448" rx="1.9" fill="#c8cacc"/><rect x="840.6" y="104" width="4.6" height="124.5" rx="2.3" fill="#7b7e81"/><path d="M841 555 L843 557 L845 555" fill="none" stroke="#b4b6b8" stroke-width="0.8"/></svg>
<div class="a" style="left:332px;top:650px;width:498px;height:6px;background:#7f848a"></div>
<div class="a" style="left:333.7px;top:162.2px;width:503.3px;height:487.8px;background:#eff0f1;border-left:1px solid #d9dbdd"></div>
<div class="a" style="left:333.7px;top:162px;width:503.3px;height:21px;background:#4a5259"></div>
<div class="a" style="left:333.7px;top:183px;width:503.3px;height:1px;background:#4f9bc8"></div>
<svg style="left:0;top:0" width="1" height="1"><path d="M341 180 V168 L343.5 165.5 H352 M344.5 170 V179 H353 M345 174 L348 177 L352.5 171" fill="none" stroke="#565e66" stroke-width="1.1"/></svg>
<div class="t" style="left:494px;top:167px;font-size:12.8px;color:#eff0f1">Maxwell-Boltzmann_plot</div>
<svg style="left:0;top:0" width="1" height="1"><path d="M778 170.5 L784 176 L790 170.5" fill="none" stroke="#eff0f1" stroke-width="1.1"/><path d="M799 175.5 L805 170 L811 175.5" fill="none" stroke="#eff0f1" stroke-width="1.1"/><circle cx="825.5" cy="173" r="9.3" fill="#eff0f1"/><path d="M821.2 168.7 L829.8 177.3 M829.8 168.7 L821.2 177.3" stroke="#4a5259" stroke-width="1.3"/></svg>
<div class="a" style="left:339px;top:184px;width:493px;height:460px;background:#c0c0c0"></div>
<div class="a" style="left:806.3px;top:202px;width:8.7px;height:442px;background:#808080"></div>
<div class="a" style="left:374px;top:635.6px;width:441px;height:8.4px;background:#808080"></div>
<div class="a" style="left:364.6px;top:193.2px;width:441.7px;height:442.4px;background:#ffffff"></div>
<svg style="left:0;top:0" width="1" height="1"><rect x="380.4" y="207.8" width="412" height="257.5" fill="none" stroke="#222" stroke-width="1.2"/><text x="593.5" y="219.5" font-size="11.3" text-anchor="middle" fill="#333" font-family="Liberation Sans" >fit to data</text><path d="M464.9 240.5 V433.3" stroke="#a8a8a8" stroke-width="1" stroke-dasharray="2 2"/><path d="M505.4 240.5 V433.3" stroke="#a8a8a8" stroke-width="1"/><path d="M545.9 240.5 V433.3" stroke="#a8a8a8" stroke-width="1" stroke-dasharray="2 2"/><path d="M586.5 240.5 V433.3" stroke="#a8a8a8" stroke-width="1"/><path d="M627.0 240.5 V433.3" stroke="#a8a8a8" stroke-width="1" stroke-dasharray="2 2"/><path d="M667.5 240.5 V433.3" stroke="#a8a8a8" stroke-width="1"/><path d="M708.0 240.5 V433.3" stroke="#a8a8a8" stroke-width="1" stroke-dasharray="2 2"/><path d="M424.4 409.2 H748.5" stroke="#a8a8a8" stroke-width="1" stroke-dasharray="2 2"/><path d="M424.4 385.1 H748.5" stroke="#a8a8a8" stroke-width="1"/><path d="M424.4 361.0 H748.5" stroke="#a8a8a8" stroke-width="1" stroke-dasharray="2 2"/><path d="M424.4 336.9 H748.5" stroke="#a8a8a8" stroke-width="1"/><path d="M424.4 312.8 H748.5" stroke="#a8a8a8" stroke-width="1" stroke-dasharray="2 2"/><path d="M424.4 288.7 H748.5" stroke="#a8a8a8" stroke-width="1"/><path d="M424.4 264.6 H748.5" stroke="#a8a8a8" stroke-width="1" stroke-dasharray="2 2"/><polyline points="424.40,385.10 425.21,385.09 426.02,385.07 426.83,385.02 427.64,384.96 428.45,384.89 429.26,384.80 430.07,384.69 430.88,384.56 431.69,384.42 432.50,384.26 433.31,384.08 434.12,383.89 434.93,383.68 435.74,383.45 436.55,383.21 437.36,382.95 438.17,382.68 438.98,382.39 439.79,382.08 440.60,381.76 441.42,381.42 442.23,381.07 443.04,380.70 443.85,380.32 444.66,379.92 445.47,379.50 446.28,379.07 447.09,378.63 447.90,378.17 448.71,377.70 449.52,377.21 450.33,376.71 451.14,376.19 451.95,375.66 452.76,375.12 453.57,374.56 454.38,373.99 455.19,373.41 456.00,372.81 456.81,372.20 457.62,371.58 458.43,370.95 459.24,370.30 460.05,369.64 460.86,368.97 461.67,368.29 462.48,367.60 463.29,366.90 464.10,366.18 464.91,365.46 465.72,364.73 466.53,363.98 467.34,363.23 468.15,362.47 468.96,361.69 469.77,360.91 470.58,360.12 471.39,359.33 472.20,358.52 473.01,357.70 473.83,356.88 474.64,356.05 475.45,355.22 476.26,354.37 477.07,353.52 477.88,352.67 478.69,351.81 479.50,350.94 480.31,350.06 481.12,349.19 481.93,348.30 482.74,347.42 483.55,346.52 484.36,345.63 485.17,344.73 485.98,343.82 486.79,342.92 487.60,342.01 488.41,341.10 489.22,340.18 490.03,339.26 490.84,338.35 491.65,337.43 492.46,336.51 493.27,335.59 494.08,334.66 494.89,333.74 495.70,332.82 496.51,331.90 497.32,330.97 498.13,330.05 498.94,329.13 499.75,328.21 500.56,327.30 501.37,326.38 502.18,325.47 502.99,324.56 503.80,323.65 504.61,322.75 505.42,321.85 506.24,320.95 507.05,320.05 507.86,319.16 508.67,318.28 509.48,317.40 510.29,316.52 511.10,315.65 511.91,314.78 512.72,313.92 513.53,313.07 514.34,312.22 515.15,311.38 515.96,310.54 516.77,309.71 517.58,308.89 518.39,308.07 519.20,307.26 520.01,306.46 520.82,305.67 521.63,304.89 522.44,304.11 523.25,303.34 524.06,302.58 524.87,301.83 525.68,301.09 526.49,300.36 527.30,299.63 528.11,298.92 528.92,298.21 529.73,297.52 530.54,296.83 531.35,296.16 532.16,295.50 532.97,294.84 533.78,294.20 534.59,293.57 535.40,292.95 536.21,292.33 537.02,291.74 537.84,291.15 538.65,290.57 539.46,290.01 540.27,289.45 541.08,288.91 541.89,288.38 542.70,287.86 543.51,287.36 544.32,286.86 545.13,286.38 545.94,285.91 546.75,285.46 547.56,285.01 548.37,284.58 549.18,284.16 549.99,283.75 550.80,283.36 551.61,282.98 552.42,282.61 553.23,282.26 554.04,281.91 554.85,281.58 555.66,281.27 556.47,280.96 557.28,280.67 558.09,280.40 558.90,280.13 559.71,279.88 560.52,279.64 561.33,279.42 562.14,279.20 562.95,279.00 563.76,278.82 564.57,278.64 565.38,278.48 566.19,278.34 567.00,278.20 567.81,278.08 568.62,277.97 569.43,277.88 570.25,277.79 571.06,277.72 571.87,277.67 572.68,277.62 573.49,277.59 574.30,277.57 575.11,277.56 575.92,277.57 576.73,277.59 577.54,277.62 578.35,277.66 579.16,277.71 579.97,277.78 580.78,277.86 581.59,277.95 582.40,278.05 583.21,278.17 584.02,278.29 584.83,278.43 585.64,278.58 586.45,278.74 587.26,278.91 588.07,279.09 588.88,279.28 589.69,279.49 590.50,279.70 591.31,279.93 592.12,280.16 592.93,280.41 593.74,280.66 594.55,280.93 595.36,281.21 596.17,281.49 596.98,281.79 597.79,282.10 598.60,282.41 599.41,282.74 600.22,283.07 601.03,283.42 601.84,283.77 602.65,284.13 603.47,284.50 604.28,284.88 605.09,285.26 605.90,285.66 606.71,286.06 607.52,286.47 608.33,286.89 609.14,287.32 609.95,287.75 610.76,288.19 611.57,288.64 612.38,289.10 613.19,289.56 614.00,290.03 614.81,290.50 615.62,290.99 616.43,291.48 617.24,291.97 618.05,292.47 618.86,292.98 619.67,293.49 620.48,294.01 621.29,294.53 622.10,295.06 622.91,295.59 623.72,296.13 624.53,296.68 625.34,297.22 626.15,297.78 626.96,298.33 627.77,298.90 628.58,299.46 629.39,300.03 630.20,300.60 631.01,301.18 631.82,301.76 632.63,302.34 633.44,302.93 634.25,303.52 635.07,304.11 635.88,304.70 636.69,305.30 637.50,305.90 638.31,306.50 639.12,307.11 639.93,307.71 640.74,308.32 641.55,308.93 642.36,309.54 643.17,310.16 643.98,310.77 644.79,311.39 645.60,312.00 646.41,312.62 647.22,313.24 648.03,313.86 648.84,314.48 649.65,315.10 650.46,315.72 651.27,316.34 652.08,316.96 652.89,317.59 653.70,318.21 654.51,318.83 655.32,319.45 656.13,320.07 656.94,320.69 657.75,321.31 658.56,321.92 659.37,322.54 660.18,323.16 660.99,323.77 661.80,324.39 662.61,325.00 663.42,325.61 664.23,326.22 665.04,326.83 665.85,327.43 666.66,328.04 667.47,328.64 668.29,329.24 669.10,329.84 669.91,330.44 670.72,331.03 671.53,331.63 672.34,332.22 673.15,332.81 673.96,333.39 674.77,333.97 675.58,334.56 676.39,335.13 677.20,335.71 678.01,336.28 678.82,336.85 679.63,337.42 680.44,337.98 681.25,338.54 682.06,339.10 682.87,339.65 683.68,340.20 684.49,340.75 685.30,341.30 686.11,341.84 686.92,342.37 687.73,342.91 688.54,343.44 689.35,343.97 690.16,344.49 690.97,345.01 691.78,345.53 692.59,346.04 693.40,346.55 694.21,347.05 695.02,347.56 695.83,348.05 696.64,348.55 697.45,349.04 698.26,349.52 699.07,350.01 699.88,350.48 700.70,350.96 701.51,351.43 702.32,351.89 703.13,352.36 703.94,352.82 704.75,353.27 705.56,353.72 706.37,354.17 707.18,354.61 707.99,355.05 708.80,355.48 709.61,355.91 710.42,356.34 711.23,356.76 712.04,357.17 712.85,357.59 713.66,358.00 714.47,358.40 715.28,358.80 716.09,359.20 716.90,359.59 717.71,359.98 718.52,360.37 719.33,360.75 720.14,361.12 720.95,361.49 721.76,361.86 722.57,362.23 723.38,362.59 724.19,362.94 725.00,363.29 725.81,363.64 726.62,363.99 727.43,364.33 728.24,364.66 729.05,364.99 729.86,365.32 730.67,365.65 731.48,365.97 732.30,366.28 733.11,366.59 733.92,366.90 734.73,367.21 735.54,367.51 736.35,367.80 737.16,368.10 737.97,368.39 738.78,368.67 739.59,368.95 740.40,369.23 741.21,369.51 742.02,369.78 742.83,370.04 743.64,370.31 744.45,370.57 745.26,370.82 746.07,371.08 746.88,371.32 747.69,371.57 748.50,371.81" fill="none" stroke="#1d1d4f" stroke-width="1.9"/><rect x="424.4" y="240.5" width="324.1" height="192.8" fill="none" stroke="#111" stroke-width="1.6"/><path d="M424.4 433.3 V427.3" stroke="#111" stroke-width="1.3"/><path d="M424.4 433.3 H430.4" stroke="#111" stroke-width="1.3"/><path d="M464.9 433.3 V430.3" stroke="#111" stroke-width="1.3"/><path d="M424.4 409.2 H427.4" stroke="#111" stroke-width="1.3"/><path d="M505.4 433.3 V427.3" stroke="#111" stroke-width="1.3"/><path d="M424.4 385.1 H430.4" stroke="#111" stroke-width="1.3"/><path d="M545.9 433.3 V430.3" stroke="#111" stroke-width="1.3"/><path d="M424.4 361.0 H427.4" stroke="#111" stroke-width="1.3"/><path d="M586.5 433.3 V427.3" stroke="#111" stroke-width="1.3"/><path d="M424.4 336.9 H430.4" stroke="#111" stroke-width="1.3"/><path d="M627.0 433.3 V430.3" stroke="#111" stroke-width="1.3"/><path d="M424.4 312.8 H427.4" stroke="#111" stroke-width="1.3"/><path d="M667.5 433.3 V427.3" stroke="#111" stroke-width="1.3"/><path d="M424.4 288.7 H430.4" stroke="#111" stroke-width="1.3"/><path d="M708.0 433.3 V430.3" stroke="#111" stroke-width="1.3"/><path d="M424.4 264.6 H427.4" stroke="#111" stroke-width="1.3"/><path d="M748.5 433.3 V427.3" stroke="#111" stroke-width="1.3"/><path d="M424.4 240.5 H430.4" stroke="#111" stroke-width="1.3"/><path d="M456.8 240.5 V243.5" stroke="#111" stroke-width="1.3"/><path d="M489.2 240.5 V246.5" stroke="#111" stroke-width="1.3"/><path d="M521.6 240.5 V243.5" stroke="#111" stroke-width="1.3"/><path d="M554.0 240.5 V246.5" stroke="#111" stroke-width="1.3"/><path d="M586.5 240.5 V243.5" stroke="#111" stroke-width="1.3"/><path d="M618.9 240.5 V246.5" stroke="#111" stroke-width="1.3"/><path d="M651.3 240.5 V243.5" stroke="#111" stroke-width="1.3"/><path d="M683.7 240.5 V246.5" stroke="#111" stroke-width="1.3"/><path d="M716.1 240.5 V243.5" stroke="#111" stroke-width="1.3"/><path d="M748.5 259.6 H745.5" stroke="#111" stroke-width="1.3"/><path d="M748.5 279.0 H742.5" stroke="#111" stroke-width="1.3"/><path d="M748.5 298.4 H745.5" stroke="#111" stroke-width="1.3"/><path d="M748.5 317.8 H742.5" stroke="#111" stroke-width="1.3"/><path d="M748.5 337.2 H745.5" stroke="#111" stroke-width="1.3"/><path d="M748.5 356.6 H742.5" stroke="#111" stroke-width="1.3"/><path d="M748.5 376.0 H745.5" stroke="#111" stroke-width="1.3"/><path d="M748.5 395.4 H742.5" stroke="#111" stroke-width="1.3"/><path d="M748.5 414.8 H745.5" stroke="#111" stroke-width="1.3"/><text x="419.0" y="439.5" font-size="10.2" text-anchor="end" fill="#222" font-family="Liberation Sans" >-0.02</text><text x="419.0" y="391.3" font-size="10.2" text-anchor="end" fill="#222" font-family="Liberation Sans" >0.00</text><text x="419.0" y="343.1" font-size="10.2" text-anchor="end" fill="#222" font-family="Liberation Sans" >0.02</text><text x="419.0" y="294.9" font-size="10.2" text-anchor="end" fill="#222" font-family="Liberation Sans" >0.04</text><text x="419.0" y="246.7" font-size="10.2" text-anchor="end" fill="#222" font-family="Liberation Sans" >0.06</text><text x="424.4" y="449.8" font-size="10.2" text-anchor="middle" fill="#222" font-family="Liberation Sans" >0.0</text><text x="505.4" y="449.8" font-size="10.2" text-anchor="middle" fill="#222" font-family="Liberation Sans" >10.0</text><text x="586.5" y="449.8" font-size="10.2" text-anchor="middle" fill="#222" font-family="Liberation Sans" >20.0</text><text x="667.5" y="449.8" font-size="10.2" text-anchor="middle" fill="#222" font-family="Liberation Sans" >30.0</text><text x="748.5" y="449.8" font-size="10.2" text-anchor="middle" fill="#222" font-family="Liberation Sans" >40.0</text><text x="586.5" y="463.5" font-size="10.2" text-anchor="middle" fill="#222" font-family="Liberation Sans" >x</text><text x="0.0" y="0.0" font-size="10.2" text-anchor="middle" fill="#222" font-family="Liberation Sans" transform="translate(386.4,339.5) rotate(90)">y</text><circle cx="424.40" cy="391.03" r="3.1" fill="#e00000"/><circle cx="432.50" cy="392.52" r="3.1" fill="#e00000"/><circle cx="440.60" cy="387.69" r="3.1" fill="#e00000"/><circle cx="448.71" cy="389.07" r="3.1" fill="#e00000"/><circle cx="456.81" cy="369.24" r="3.1" fill="#e00000"/><circle cx="464.91" cy="369.05" r="3.1" fill="#e00000"/><circle cx="473.01" cy="362.38" r="3.1" fill="#e00000"/><circle cx="481.12" cy="339.52" r="3.1" fill="#e00000"/><circle cx="489.22" cy="361.24" r="3.1" fill="#e00000"/><circle cx="497.32" cy="323.02" r="3.1" fill="#e00000"/><circle cx="505.42" cy="321.08" r="3.1" fill="#e00000"/><circle cx="513.53" cy="311.81" r="3.1" fill="#e00000"/><circle cx="521.63" cy="313.47" r="3.1" fill="#e00000"/><circle cx="529.73" cy="311.40" r="3.1" fill="#e00000"/><circle cx="537.84" cy="285.07" r="3.1" fill="#e00000"/><circle cx="545.94" cy="291.38" r="3.1" fill="#e00000"/><circle cx="554.04" cy="276.15" r="3.1" fill="#e00000"/><circle cx="562.14" cy="271.71" r="3.1" fill="#e00000"/><circle cx="570.25" cy="279.67" r="3.1" fill="#e00000"/><circle cx="578.35" cy="277.66" r="3.1" fill="#e00000"/><circle cx="586.45" cy="266.73" r="3.1" fill="#e00000"/><circle cx="594.55" cy="290.76" r="3.1" fill="#e00000"/><circle cx="602.65" cy="295.36" r="3.1" fill="#e00000"/><circle cx="610.76" cy="290.70" r="3.1" fill="#e00000"/><circle cx="618.86" cy="298.59" r="3.1" fill="#e00000"/><circle cx="626.96" cy="295.37" r="3.1" fill="#e00000"/><circle cx="635.07" cy="302.08" r="3.1" fill="#e00000"/><circle cx="643.17" cy="321.85" r="3.1" fill="#e00000"/><circle cx="651.27" cy="326.49" r="3.1" fill="#e00000"/><circle cx="659.37" cy="329.72" r="3.1" fill="#e00000"/><circle cx="667.47" cy="343.15" r="3.1" fill="#e00000"/><circle cx="675.58" cy="336.27" r="3.1" fill="#e00000"/><circle cx="683.68" cy="338.18" r="3.1" fill="#e00000"/><circle cx="691.78" cy="343.82" r="3.1" fill="#e00000"/><circle cx="699.88" cy="349.40" r="3.1" fill="#e00000"/><circle cx="707.99" cy="338.66" r="3.1" fill="#e00000"/><circle cx="716.09" cy="355.15" r="3.1" fill="#e00000"/><circle cx="724.19" cy="338.91" r="3.1" fill="#e00000"/><circle cx="732.30" cy="379.70" r="3.1" fill="#e00000"/><circle cx="740.40" cy="376.41" r="3.1" fill="#e00000"/><circle cx="748.50" cy="381.96" r="3.1" fill="#e00000"/><rect x="624.5" y="386.7" width="113" height="36.3" fill="#fff" stroke="#111" stroke-width="1.1"/><circle cx="645.2" cy="398.2" r="3.3" fill="#e00000"/><text x="663.0" y="402.5" font-size="10.2" text-anchor="start" fill="#222" font-family="Liberation Sans" >measured data</text><path d="M630 411.7 H660" stroke="#1d1d4f" stroke-width="1.4"/><text x="663.0" y="416.5" font-size="10.2" text-anchor="start" fill="#222" font-family="Liberation Sans" >fit</text><rect x="378.5" y="484.9" width="411.9" height="140.3" fill="none" stroke="#222" stroke-width="1.2"/><text x="571.5" y="495.5" font-size="11.3" text-anchor="middle" fill="#333" font-family="Liberation Sans" >residuals</text><path d="M458.8 520.7 V589.5" stroke="#a8a8a8" stroke-width="1" stroke-dasharray="2 2"/><path d="M500.8 520.7 V589.5" stroke="#a8a8a8" stroke-width="1"/><path d="M542.7 520.7 V589.5" stroke="#a8a8a8" stroke-width="1" stroke-dasharray="2 2"/><path d="M584.7 520.7 V589.5" stroke="#a8a8a8" stroke-width="1"/><path d="M626.7 520.7 V589.5" stroke="#a8a8a8" stroke-width="1" stroke-dasharray="2 2"/><path d="M668.6 520.7 V589.5" stroke="#a8a8a8" stroke-width="1"/><path d="M710.6 520.7 V589.5" stroke="#a8a8a8" stroke-width="1" stroke-dasharray="2 2"/><path d="M416.8 537.9 H752.6" stroke="#a8a8a8" stroke-width="1" stroke-dasharray="2 2"/><path d="M416.8 572.3 H752.6" stroke="#a8a8a8" stroke-width="1" stroke-dasharray="2 2"/><path d="M416.8 555.1 H752.6" stroke="#111" stroke-width="1.5"/><path d="M416.80 555.1 V546.64" stroke="#111" stroke-width="1.1"/><circle cx="416.80" cy="546.64" r="3.2" fill="#000"/><path d="M425.19 555.1 V543.30" stroke="#111" stroke-width="1.1"/><circle cx="425.19" cy="543.30" r="3.2" fill="#000"/><path d="M433.59 555.1 V546.64" stroke="#111" stroke-width="1.1"/><circle cx="433.59" cy="546.64" r="3.2" fill="#000"/><path d="M441.99 555.1 V538.86" stroke="#111" stroke-width="1.1"/><circle cx="441.99" cy="538.86" r="3.2" fill="#000"/><path d="M450.38 555.1 V559.33" stroke="#111" stroke-width="1.1"/><circle cx="450.38" cy="559.33" r="3.2" fill="#000"/><path d="M458.78 555.1 V549.97" stroke="#111" stroke-width="1.1"/><circle cx="458.78" cy="549.97" r="3.2" fill="#000"/><path d="M467.17 555.1 V548.43" stroke="#111" stroke-width="1.1"/><circle cx="467.17" cy="548.43" r="3.2" fill="#000"/><path d="M475.56 555.1 V568.89" stroke="#111" stroke-width="1.1"/><circle cx="475.56" cy="568.89" r="3.2" fill="#000"/><path d="M483.96 555.1 V525.03" stroke="#111" stroke-width="1.1"/><circle cx="483.96" cy="525.03" r="3.2" fill="#000"/><path d="M492.36 555.1 V566.45" stroke="#111" stroke-width="1.1"/><circle cx="492.36" cy="566.45" r="3.2" fill="#000"/><path d="M500.75 555.1 V556.20" stroke="#111" stroke-width="1.1"/><circle cx="500.75" cy="556.20" r="3.2" fill="#000"/><path d="M509.14 555.1 V556.89" stroke="#111" stroke-width="1.1"/><circle cx="509.14" cy="556.89" r="3.2" fill="#000"/><path d="M517.54 555.1 V542.85" stroke="#111" stroke-width="1.1"/><circle cx="517.54" cy="542.85" r="3.2" fill="#000"/><path d="M525.94 555.1 V535.29" stroke="#111" stroke-width="1.1"/><circle cx="525.94" cy="535.29" r="3.2" fill="#000"/><path d="M534.33 555.1 V563.77" stroke="#111" stroke-width="1.1"/><circle cx="534.33" cy="563.77" r="3.2" fill="#000"/><path d="M542.73 555.1 V547.29" stroke="#111" stroke-width="1.1"/><circle cx="542.73" cy="547.29" r="3.2" fill="#000"/><path d="M551.12 555.1 V563.32" stroke="#111" stroke-width="1.1"/><circle cx="551.12" cy="563.32" r="3.2" fill="#000"/><path d="M559.51 555.1 V565.80" stroke="#111" stroke-width="1.1"/><circle cx="559.51" cy="565.80" r="3.2" fill="#000"/><path d="M567.91 555.1 V552.42" stroke="#111" stroke-width="1.1"/><circle cx="567.91" cy="552.42" r="3.2" fill="#000"/><path d="M576.31 555.1 V555.10" stroke="#111" stroke-width="1.1"/><circle cx="576.31" cy="555.10" r="3.2" fill="#000"/><path d="M584.70 555.1 V572.23" stroke="#111" stroke-width="1.1"/><circle cx="584.70" cy="572.23" r="3.2" fill="#000"/><path d="M593.10 555.1 V541.06" stroke="#111" stroke-width="1.1"/><circle cx="593.10" cy="541.06" r="3.2" fill="#000"/><path d="M601.49 555.1 V539.07" stroke="#111" stroke-width="1.1"/><circle cx="601.49" cy="539.07" r="3.2" fill="#000"/><path d="M609.88 555.1 V551.52" stroke="#111" stroke-width="1.1"/><circle cx="609.88" cy="551.52" r="3.2" fill="#000"/><path d="M618.28 555.1 V547.08" stroke="#111" stroke-width="1.1"/><circle cx="618.28" cy="547.08" r="3.2" fill="#000"/><path d="M626.67 555.1 V559.33" stroke="#111" stroke-width="1.1"/><circle cx="626.67" cy="559.33" r="3.2" fill="#000"/><path d="M635.07 555.1 V557.99" stroke="#111" stroke-width="1.1"/><circle cx="635.07" cy="557.99" r="3.2" fill="#000"/><path d="M643.47 555.1 V538.42" stroke="#111" stroke-width="1.1"/><circle cx="643.47" cy="538.42" r="3.2" fill="#000"/><path d="M651.86 555.1 V540.62" stroke="#111" stroke-width="1.1"/><circle cx="651.86" cy="540.62" r="3.2" fill="#000"/><path d="M660.25 555.1 V544.85" stroke="#111" stroke-width="1.1"/><circle cx="660.25" cy="544.85" r="3.2" fill="#000"/><path d="M668.65 555.1 V534.39" stroke="#111" stroke-width="1.1"/><circle cx="668.65" cy="534.39" r="3.2" fill="#000"/><path d="M677.05 555.1 V552.66" stroke="#111" stroke-width="1.1"/><circle cx="677.05" cy="552.66" r="3.2" fill="#000"/><path d="M685.44 555.1 V557.99" stroke="#111" stroke-width="1.1"/><circle cx="685.44" cy="557.99" r="3.2" fill="#000"/><path d="M693.84 555.1 V557.54" stroke="#111" stroke-width="1.1"/><circle cx="693.84" cy="557.54" r="3.2" fill="#000"/><path d="M702.23 555.1 V556.65" stroke="#111" stroke-width="1.1"/><circle cx="702.23" cy="556.65" r="3.2" fill="#000"/><path d="M710.62 555.1 V578.49" stroke="#111" stroke-width="1.1"/><circle cx="710.62" cy="578.49" r="3.2" fill="#000"/><path d="M719.02 555.1 V560.88" stroke="#111" stroke-width="1.1"/><circle cx="719.02" cy="560.88" r="3.2" fill="#000"/><path d="M727.41 555.1 V589.40" stroke="#111" stroke-width="1.1"/><circle cx="727.41" cy="589.40" r="3.2" fill="#000"/><path d="M735.81 555.1 V535.94" stroke="#111" stroke-width="1.1"/><circle cx="735.81" cy="535.94" r="3.2" fill="#000"/><path d="M744.21 555.1 V544.85" stroke="#111" stroke-width="1.1"/><circle cx="744.21" cy="544.85" r="3.2" fill="#000"/><path d="M752.60 555.1 V540.62" stroke="#111" stroke-width="1.1"/><circle cx="752.60" cy="540.62" r="3.2" fill="#000"/><rect x="416.8" y="520.7" width="335.8" height="68.8" fill="none" stroke="#111" stroke-width="1.6"/><path d="M416.8 589.5 V584.5" stroke="#111" stroke-width="1.3"/><path d="M458.8 589.5 V586.5" stroke="#111" stroke-width="1.3"/><path d="M500.8 589.5 V584.5" stroke="#111" stroke-width="1.3"/><path d="M542.7 589.5 V586.5" stroke="#111" stroke-width="1.3"/><path d="M584.7 589.5 V584.5" stroke="#111" stroke-width="1.3"/><path d="M626.7 589.5 V586.5" stroke="#111" stroke-width="1.3"/><path d="M668.6 589.5 V584.5" stroke="#111" stroke-width="1.3"/><path d="M710.6 589.5 V586.5" stroke="#111" stroke-width="1.3"/><path d="M752.6 589.5 V584.5" stroke="#111" stroke-width="1.3"/><path d="M450.4 520.7 V523.7" stroke="#111" stroke-width="1.3"/><path d="M484.0 520.7 V525.7" stroke="#111" stroke-width="1.3"/><path d="M517.5 520.7 V523.7" stroke="#111" stroke-width="1.3"/><path d="M551.1 520.7 V525.7" stroke="#111" stroke-width="1.3"/><path d="M584.7 520.7 V523.7" stroke="#111" stroke-width="1.3"/><path d="M618.3 520.7 V525.7" stroke="#111" stroke-width="1.3"/><path d="M651.9 520.7 V523.7" stroke="#111" stroke-width="1.3"/><path d="M685.4 520.7 V525.7" stroke="#111" stroke-width="1.3"/><path d="M719.0 520.7 V523.7" stroke="#111" stroke-width="1.3"/><path d="M752.6 527.6 H749.6" stroke="#111" stroke-width="1.2"/><path d="M752.6 534.5 H747.6" stroke="#111" stroke-width="1.2"/><path d="M752.6 541.4 H749.6" stroke="#111" stroke-width="1.2"/><path d="M752.6 548.3 H747.6" stroke="#111" stroke-width="1.2"/><path d="M752.6 555.2 H749.6" stroke="#111" stroke-width="1.2"/><path d="M752.6 562.1 H747.6" stroke="#111" stroke-width="1.2"/><path d="M752.6 569.0 H749.6" stroke="#111" stroke-width="1.2"/><path d="M752.6 575.9 H747.6" stroke="#111" stroke-width="1.2"/><path d="M752.6 582.8 H749.6" stroke="#111" stroke-width="1.2"/><path d="M416.8 537.9 H419.8" stroke="#111" stroke-width="1.3"/><path d="M416.8 572.3 H419.8" stroke="#111" stroke-width="1.3"/><text x="412.5" y="595.5" font-size="10.2" text-anchor="end" fill="#222" font-family="Liberation Sans" >-0.01</text><text x="412.5" y="561.1" font-size="10.2" text-anchor="end" fill="#222" font-family="Liberation Sans" >0.00</text><text x="412.5" y="526.7" font-size="10.2" text-anchor="end" fill="#222" font-family="Liberation Sans" >0.01</text><text x="416.8" y="606.0" font-size="10.2" text-anchor="middle" fill="#222" font-family="Liberation Sans" >0.0</text><text x="500.8" y="606.0" font-size="10.2" text-anchor="middle" fill="#222" font-family="Liberation Sans" >10.0</text><text x="584.7" y="606.0" font-size="10.2" text-anchor="middle" fill="#222" font-family="Liberation Sans" >20.0</text><text x="668.6" y="606.0" font-size="10.2" text-anchor="middle" fill="#222" font-family="Liberation Sans" >30.0</text><text x="752.6" y="606.0" font-size="10.2" text-anchor="middle" fill="#222" font-family="Liberation Sans" >40.0</text><text x="581.5" y="619.5" font-size="10.2" text-anchor="middle" fill="#222" font-family="Liberation Sans" >x</text><text x="0.0" y="0.0" font-size="10.2" text-anchor="middle" fill="#222" font-family="Liberation Sans" transform="translate(383.4,556.4) rotate(90)">y</text></svg>
<div class="a" style="left:870px;top:71px;width:2px;height:584px;background:#e6e7e9"></div>
<div class="a" style="left:872px;top:71px;width:375px;height:584px;background:#f2f3f5;border:1px solid #dcdee0"></div>
<div class="a" style="left:873px;top:96px;width:373px;height:1px;background:#e2e4e6"></div>
<div class="t" style="left:873.5px;top:77.5px;font-size:12.8px">Fit</div>
<svg style="left:0;top:0" width="1" height="1"><path d="M1214 78 L1219 83 L1214 88 L1209 83 Z" fill="none" stroke="#6d7073" stroke-width="1"/><circle cx="1235.5" cy="82.8" r="9.25" fill="#8e9194"/><path d="M1230.5 77.8 L1240.5 87.8 M1240.5 77.8 L1230.5 87.8" stroke="#fcfcfc" stroke-width="1.1"/></svg>
<div class="a" style="left:875.3px;top:117.5px;width:368.2px;height:511.5px;background:#f2f3f5;border:1px solid #d6d8da;border-radius:2px"></div>
<div class="a" style="left:875.3px;top:99.3px;width:50.7px;height:19.7px;background:#f2f3f5;border:1px solid #d6d8da;border-bottom:none;border-radius:2px 2px 0 0"></div>
<div class="t" style="left:878.3px;top:102px;font-size:12.8px">General</div>
<div class="a" style="left:926px;top:99.3px;width:31.3px;height:18.7px;background:#d2d3d5;border-left:1px solid #c4c6c8"></div>
<div class="t" style="left:929.0px;top:102px;font-size:12.8px">Line</div>
<div class="a" style="left:957.3px;top:99.3px;width:48.9px;height:18.7px;background:#d2d3d5;border-left:1px solid #c4c6c8"></div>
<div class="t" style="left:960.3px;top:102px;font-size:12.8px">Symbol</div>
<div class="a" style="left:1006.2px;top:99.3px;width:43.3px;height:18.7px;background:#d2d3d5;border-left:1px solid #c4c6c8"></div>
<div class="t" style="left:1009.2px;top:102px;font-size:12.8px">Values</div>
<div class="a" style="left:1049.5px;top:99.3px;width:40.2px;height:18.7px;background:#d2d3d5;border-left:1px solid #c4c6c8"></div>
<div class="t" style="left:1052.5px;top:102px;font-size:12.8px">Filling</div>
<div class="t" style="left:877px;top:124.5px;font-size:12.8px">Name</div>
<div class="t" style="left:877px;top:147.0px;font-size:12.8px">Comment</div>
<div class="t" style="left:877px;top:171.2px;font-size:12.8px;font-weight:bold;font-size:12px">Data:</div>
<div class="t" style="left:877px;top:190.5px;font-size:12.8px">x-Data</div>
<div class="t" style="left:877px;top:213.5px;font-size:12.8px">y-Data</div>
<div class="t" style="left:877px;top:236.1px;font-size:12.8px">Weights</div>
<div class="t" style="left:877px;top:256.9px;font-size:12.8px">x-Range</div>
<div class="t" style="left:948px;top:277.1px;font-size:12.8px;color:#a5a8ab">Min</div>
<div class="t" style="left:948px;top:299.8px;font-size:12.8px;color:#a5a8ab">Max</div>
<div class="t" style="left:877px;top:325.4px;font-size:12.8px;font-weight:bold;font-size:12px">Fit:</div>
<div class="t" style="left:877px;top:344.7px;font-size:12.8px">Model</div>
<div class="t" style="left:877px;top:378.1px;font-size:12.8px">f(x)</div>
<div class="t" style="left:877px;top:439.2px;font-size:12.8px;font-weight:bold;font-size:12px">Results:</div>
<div class="a" style="left:948.5px;top:121px;width:292.9px;height:20.0px;background:#fcfcfc;border:1px solid #dcdee0;border-radius:2px"></div>
<div class="a" style="left:948.5px;top:143.7px;width:292.9px;height:19.7px;background:#fcfcfc;border:1px solid #dcdee0;border-radius:2px"></div>
<div class="t" style="left:950.5px;top:124.5px;font-size:12.8px">fit</div>
<div class="a" style="left:948px;top:186.5px;width:293.4px;height:20.9px;background:linear-gradient(#eceded,#e6e7e8);border:1px solid #d0d2d4;border-radius:2px"></div>
<div class="t" style="left:950.5px;top:190.4px;font-size:12.8px">x</div>
<svg style="left:0;top:0" width="1" height="1"><path d="M1234.5 195.9 L1236.3 197.9 L1238 195.9" fill="none" stroke="#6c6f72" stroke-width="0.8"/></svg>
<div class="a" style="left:948px;top:209.7px;width:293.4px;height:20.9px;background:linear-gradient(#eceded,#e6e7e8);border:1px solid #d0d2d4;border-radius:2px"></div>
<div class="t" style="left:950.5px;top:213.6px;font-size:12.8px">y_meas</div>
<svg style="left:0;top:0" width="1" height="1"><path d="M1234.5 219.1 L1236.3 221.1 L1238 219.1" fill="none" stroke="#6c6f72" stroke-width="0.8"/></svg>
<div class="a" style="left:948px;top:232.4px;width:293.4px;height:20.4px;background:linear-gradient(#eceded,#e6e7e8);border:1px solid #d0d2d4;border-radius:2px"></div>
<svg style="left:0;top:0" width="1" height="1"><path d="M1234.5 241.6 L1236.3 243.6 L1238 241.6" fill="none" stroke="#6c6f72" stroke-width="0.8"/></svg>
<svg style="left:0;top:0" width="1" height="1"><rect x="948.5" y="260" width="6.5" height="7" fill="#fcfcfc" stroke="#d0d2d4" stroke-width="0.6"/><rect x="949.8" y="261.4" width="4" height="4.2" fill="#3daee9"/></svg>
<div class="t" style="left:957.5px;top:256.9px;font-size:12.8px">Auto</div>
<div class="a" style="left:970.7px;top:273.5px;width:270.3px;height:20.2px;background:#eff0f1;border:1px solid #dcdee0;border-radius:2px"></div>
<div class="t" style="left:975px;top:277.1px;font-size:12.8px;color:#a5a8ab">0,000000</div>
<div class="a" style="left:973.2px;top:296.2px;width:267.8px;height:20.2px;background:#eff0f1;border:1px solid #dcdee0;border-radius:2px"></div>
<div class="t" style="left:978px;top:299.8px;font-size:12.8px;color:#a5a8ab">99,000000</div>
<svg style="left:0;top:0" width="1" height="1"><path d="M1234.5 281.5 L1236 280 L1237.5 281.5 M1234.5 285.5 L1236 287 L1237.5 285.5 M1234.5 304.2 L1236 302.7 L1237.5 304.2 M1234.5 308.2 L1236 309.7 L1237.5 308.2" fill="none" stroke="#b4b6b8" stroke-width="0.7"/></svg>
<div class="a" style="left:948px;top:340.9px;width:293.4px;height:20.6px;background:linear-gradient(#eceded,#e6e7e8);border:1px solid #d0d2d4;border-radius:2px"></div>
<div class="t" style="left:950.5px;top:344.7px;font-size:12.8px">Maxwell-Boltzmann</div>
<svg style="left:0;top:0" width="1" height="1"><path d="M1234.5 350.2 L1236.3 352.2 L1238 350.2" fill="none" stroke="#6c6f72" stroke-width="0.8"/></svg>
<div class="a" style="left:948.3px;top:363.4px;width:292.7px;height:42.5px;background:#fcfcfc;border:1px solid #dcdee0;border-radius:2px"></div>
<div class="t" style="left:950.5px;top:366px;font-size:13px;color:#31363b"><b style="color:#600c0c;font-size:13px">sqrt</b>(2/<b style="color:#600c0c;font-size:13px">pi</b>)*<span style="color:#2a7a2a">x</span>^2*<b style="color:#600c0c;font-size:13px">exp</b>(-<span style="color:#2a7a2a">x</span>^2/(2*<span style="color:#2a7a2a">a</span>^2))/<span style="color:#2a7a2a">a</span>^3</div>
<div class="a" style="left:1116px;top:409.7px;width:71.5px;height:21.3px;background:linear-gradient(#eeeff0,#e6e7e8);border:1px solid #cdcfd1;border-radius:2px"></div>
<div class="a" style="left:1190.5px;top:409.7px;width:51.2px;height:21.3px;background:linear-gradient(#eeeff0,#e6e7e8);border:1px solid #cdcfd1;border-radius:2px"></div>
<div class="t" style="left:1119.5px;top:414.0px;font-size:12.8px">Parameters</div>
<div class="t" style="left:1193.5px;top:414.0px;font-size:12.8px">Options</div>
<div class="a" style="left:948.3px;top:438px;width:293.1px;height:133.4px;background:#fcfcfc;border:1px solid #93cee9;border-radius:2px"></div>
<div class="t" style="left:950.5px;top:442.5px;font-size:12.8px"><b>Parameters:</b></div>
<div class="t" style="left:950.5px;top:459.0px;font-size:12.8px">a = 13.1565±2.0508</div>
<div class="t" style="left:950.5px;top:491.0px;font-size:12.8px"><b>Goodness of fit:</b></div>
<div class="t" style="left:950.5px;top:508.0px;font-size:12.8px">sum of squared errors (χ²): 0.00214907</div>
<div class="t" style="left:950.5px;top:524.5px;font-size:12.8px">mean squared error: 2.14907e-05</div>
<div class="t" style="left:950.5px;top:541.2px;font-size:12.8px">root-mean squared error (reduced χ²): 0.0046358</div>
<div class="t" style="left:950.5px;top:557.0px;font-size:12.8px">mean absolute error: 0.363451</div>
<svg style="left:0;top:0" width="1" height="1"><path d="M1234.8 443.5 L1236.6 441.7 L1238.4 443.5 M1234.8 566 L1236.6 567.8 L1238.4 566" fill="none" stroke="#b4b6b8" stroke-width="0.7"/><rect x="1234.7" y="446.7" width="3.8" height="117" rx="1.9" fill="#c8cacc"/><rect x="1234.5" y="478" width="4.2" height="52" rx="2.1" fill="#3daee9"/></svg>
<div class="a" style="left:1149.4px;top:575.8px;width:92.4px;height:23.8px;background:#e2e3e4;border:1px solid #d8dadc;border-radius:2px"></div>
<svg style="left:0;top:0" width="1" height="1"><circle cx="1162.5" cy="587.7" r="5.5" fill="none" stroke="#a9acaf" stroke-width="1.1" stroke-dasharray="2.2 1"/><path d="M1161 585 L1165 587.7 L1161 590.4 Z" fill="#a9acaf"/></svg>
<div class="t" style="left:1173.5px;top:581.2px;font-size:12.8px;color:#a5a8ab">Recalculate</div>
<svg style="left:0;top:0" width="1" height="1"><rect x="877.5" y="614" width="7" height="7" fill="#fcfcfc" stroke="#d0d2d4" stroke-width="0.6"/><rect x="878.8" y="615.3" width="4.4" height="4.4" fill="#3daee9"/></svg>
<div class="t" style="left:886.5px;top:611.0px;font-size:12.8px">visible</div>
<div class="a" style="left:1182px;top:631.5px;width:18.4px;height:17.8px;background:linear-gradient(#eeeff0,#e6e7e8);border:1px solid #cdcfd1;border-radius:2px"></div>
<div class="a" style="left:1200.8px;top:631.5px;width:18.4px;height:17.8px;background:linear-gradient(#eeeff0,#e6e7e8);border:1px solid #cdcfd1;border-radius:2px"></div>
<div class="a" style="left:1219.5px;top:631.5px;width:18.4px;height:17.8px;background:linear-gradient(#eeeff0,#e6e7e8);border:1px solid #cdcfd1;border-radius:2px"></div>
<svg style="left:0;top:0" width="1" height="1"><path d="M1186.5 636.5 H1190 L1191.5 638 H1196.5 V645.5 H1186.5 Z" fill="none" stroke="#7d8083"/><rect x="1186.5" y="636.5" width="10" height="2" fill="#7d8083"/><path d="M1205 636.5 H1212 L1214 638.5 V645.5 H1205 Z M1207 636.5 V639.5 H1211 V636.5 M1207 645.5 V642 H1212 V645.5" fill="none" stroke="#7d8083"/><path d="M1223.5 636.5 H1230.5 L1232.5 638.5 V645.5 H1223.5 Z M1225.5 636.5 V639.5 H1229.5 V636.5" fill="none" stroke="#7d8083"/><path d="M1228 645 L1233 640" stroke="#555" stroke-width="1.2"/></svg>
<div class="a" style="left:0;top:656px;width:1248px;height:18px;background:#eff0f1"></div>
<div class="a" style="left:0;top:673px;width:1248px;height:1px;background:#5a5e63"></div><div class="a" style="left:0;top:672px;width:1248px;height:1px;background:#b4b7ba"></div>
</div></body></html>
